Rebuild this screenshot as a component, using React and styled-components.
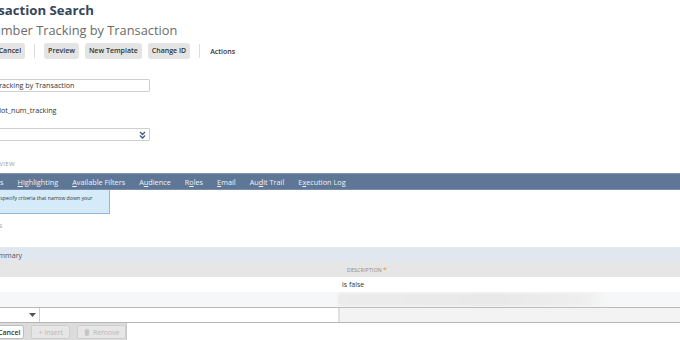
import styled, { createGlobalStyle } from "styled-components";

const Global = createGlobalStyle`
  html, body {
    margin: 0;
    padding: 0;
    background: #ffffff;
    overflow: hidden;
  }
  body {
    font-family: "Open Sans", "Liberation Sans", sans-serif;
    color: #333333;
    width: 680px;
    height: 340px;
  }
`;

const Page = styled.div`
  margin-left: -60px;
  width: 740px;
  display: flex;
  flex-direction: column;
`;

const Head = styled.div`
  padding-left: ${(p) => p.$indent || 0}px;
`;

const Title = styled.h1`
  margin: 0;
  padding-top: 2px;
  font-size: 13.2px;
  font-weight: 700;
  line-height: 16px;
  color: #34465a;
`;

const Subtitle = styled.h2`
  margin: 0;
  margin-left: -7px;
  padding-top: 3px;
  font-size: 12.8px;
  font-weight: 400;
  line-height: 18px;
  color: #6b6b6b;
`;

const Toolbar = styled.div`
  display: flex;
  align-items: center;
  gap: 6px;
  margin-top: 4px;
  height: 16px;
  padding-left: ${(p) => p.$indent || 0}px;
`;

const Btn = styled.button`
  height: 16px;
  padding: 0 4px;
  border: none;
  border-radius: 3px;
  background: #e4e4e4;
  color: #333;
  font-family: inherit;
  font-size: 7px;
  font-weight: 600;
  line-height: 16px;
`;

const Sep = styled.span`
  width: 1px;
  height: 14px;
  background: #dcdcdc;
  margin: 0 3px;
`;

const Actions = styled.span`
  font-size: 7px;
  font-weight: 600;
  color: #333;
  margin-left: 1px;
`;

const Form = styled.div`
  display: flex;
  flex-direction: column;
  padding-left: ${(p) => p.$indent || 0}px;
  margin-top: 12px;
`;

const Label = styled.div`
  height: 8px;
  font-size: 5.5px;
  text-transform: uppercase;
  color: #9a9a9a;
  letter-spacing: 0.2px;
  margin-top: ${(p) => p.$top || 0}px;
`;

const TextInput = styled.div`
  box-sizing: border-box;
  width: 202px;
  height: 13px;
  border: 1px solid #cfcfcf;
  border-radius: 1px;
  padding: 0 4px;
  font-size: 7.2px;
  line-height: 11px;
  color: #333;
`;

const Value = styled.div`
  font-size: 7.2px;
  line-height: 11px;
  color: #333;
  text-indent: 1px;
  margin-top: ${(p) => p.$top || 0}px;
`;

const Select = styled.div`
  box-sizing: border-box;
  width: 202px;
  height: 13px;
  border: 1px solid #cfcfcf;
  border-radius: 1px;
  display: flex;
  align-items: center;
  justify-content: flex-end;
  padding-right: 3px;
`;

const SectionLabel = styled.div`
  font-size: 6px;
  text-transform: uppercase;
  color: #9a9a9a;
  letter-spacing: 0.3px;
  padding-left: ${(p) => p.$indent || 0}px;
  margin-top: ${(p) => p.$top || 0}px;
  line-height: 8px;
`;

const TabBar = styled.div`
  margin-top: 5px;
  height: 17px;
  box-sizing: border-box;
  background: #5f7797;
  border-top: 1px solid #8497b0;
  border-bottom: 1px solid #7a8ea9;
  display: flex;
  align-items: center;
`;

const TabList = styled.div`
  display: flex;
  align-items: center;
  gap: 14px;
`;

const Tab = styled.span`
  font-size: 7.3px;
  color: #eef2f7;
  white-space: nowrap;
  u {
    text-decoration: underline;
    text-underline-offset: 1px;
  }
`;

const Tip = styled.div`
  box-sizing: border-box;
  width: 170px;
  height: 24px;
  background: #d5ebfa;
  border: 1px solid #92b6d8;
  border-top: none;
  font-size: 5.2px;
  color: #333;
  padding: 4px 0 0 0;
  text-indent: -4px;
  line-height: 8px;
  white-space: nowrap;
  overflow: hidden;
`;

const SubTabBar = styled.div`
  margin-top: 17px;
  height: 15px;
  background: #e1e7ef;
  display: flex;
  align-items: center;
  padding-left: ${(p) => p.$indent || 0}px;
  font-size: 7.2px;
  color: #555;
  u {
    text-underline-offset: 1px;
  }
`;

const Grid = styled.div`
  display: grid;
  grid-template-columns: 398px 1fr;
`;

const HeadCell = styled.div`
  height: 15px;
  background: #e6e6e6;
  font-size: 5.2px;
  text-transform: uppercase;
  color: #888;
  display: flex;
  align-items: center;
  padding-left: ${(p) => p.$pad || 0}px;
  letter-spacing: 0.2px;
  span {
    color: #e59a2b;
    font-size: 7px;
    margin-left: 1px;
  }
`;

const Cell = styled.div`
  height: 15px;
  box-sizing: border-box;
  background: ${(p) => p.$bg || "#ffffff"};
  font-size: 7px;
  color: #333;
  display: flex;
  align-items: center;
  padding-left: ${(p) => p.$pad || 0}px;
`;

const Smudge = styled.div`
  width: 270px;
  height: 13px;
  background: linear-gradient(90deg, #ececec, #e9e9e9 60%, #efefef 92%, #f6f7f8);
  filter: blur(1px);
`;

const EditRow = styled.div`
  display: flex;
  height: 16px;
  box-sizing: border-box;
  border-top: 1px solid #b9b9b9;
  border-bottom: 1px solid #b5b5b5;
`;

const EditSelect = styled.div`
  box-sizing: border-box;
  width: 100px;
  border-right: 1px solid #d0d0d0;
  display: flex;
  align-items: center;
  justify-content: flex-end;
  padding-right: 3px;
  background: #fff;
`;

const EditInput = styled.div`
  width: 298px;
  background: #fff;
  border-right: 2px solid #e0e0e0;
`;

const EditGray = styled.div`
  flex: 1;
  background: #f3f3f3;
`;

const Bottom = styled.div`
  display: flex;
  align-items: center;
  gap: 7px;
  width: 187px;
  height: 18px;
  box-sizing: border-box;
  background: #dcdcdc;
  border-right: 1px solid #c8c8c8;
  padding-left: ${(p) => p.$indent || 0}px;
`;

const SmallBtn = styled.button`
  height: 14px;
  box-sizing: border-box;
  padding: 0 ${(p) => p.$pad ?? 6}px;
  border-radius: 2px;
  border: 1px solid ${(p) => (p.disabled ? "#cfcfcf" : "#bdbdbd")};
  background: ${(p) => (p.disabled ? "#e6e6e6" : "#ffffff")};
  color: ${(p) => (p.disabled ? "#b8b8b8" : "#333")};
  font-family: inherit;
  font-size: 7px;
  font-weight: ${(p) => (p.disabled ? 400 : 600)};
  display: flex;
  align-items: center;
  gap: 3px;
  white-space: nowrap;
`;

const DoubleChevron = () => (
  <svg width="7" height="8" viewBox="0 0 7 8">
    <path d="M1 1l2.5 2.5L6 1M1 4.5L3.5 7 6 4.5" fill="none" stroke="#3d5a86" strokeWidth="1.3" />
  </svg>
);

const Caret = () => (
  <svg width="7" height="4" viewBox="0 0 7 4">
    <path d="M0 0h7L3.5 4z" fill="#555" />
  </svg>
);

const Trash = () => (
  <svg width="6" height="7" viewBox="0 0 6 7">
    <path d="M0.5 1h5M2 1V0.4h2V1M1 1.6h4l-0.4 5H1.4z" fill="#c4c4c4" stroke="#c4c4c4" strokeWidth="0.6" />
  </svg>
);

export default function App() {
  return (
    <>
      <Global />
      <Page>
        <Head $indent={28}>
          <Title>Transaction Search</Title>
          <Subtitle>Lot Number Tracking by Transaction</Subtitle>
        </Head>
        <Toolbar $indent={25}>
          <Btn>Save</Btn>
          <Btn>Cancel</Btn>
          <Sep />
          <Btn>Preview</Btn>
          <Btn>New Template</Btn>
          <Btn>Change ID</Btn>
          <Sep />
          <Actions>Actions</Actions>
        </Toolbar>
        <Form $indent={8}>
          <Label>Search title</Label>
          <TextInput>Lot Number Tracking by Transaction</TextInput>
          <Label $top={4}>ID</Label>
          <Value $top={1}>customsearch_lot_num_tracking</Value>
          <Label $top={4}>Owner</Label>
          <Select>
            <DoubleChevron />
          </Select>
        </Form>
        <SectionLabel $indent={43} $top={19}>Overview</SectionLabel>
        <TabBar>
          <TabList>
            <Tab><u>C</u>riteria</Tab>
            <Tab><u>R</u>esults</Tab>
            <Tab><u>H</u>ighlighting</Tab>
            <Tab><u>A</u>vailable Filters</Tab>
            <Tab>A<u>u</u>dience</Tab>
            <Tab>R<u>o</u>les</Tab>
            <Tab><u>E</u>mail</Tab>
            <Tab>Au<u>d</u>it Trail</Tab>
            <Tab>E<u>x</u>ecution Log</Tab>
          </TabList>
        </TabBar>
        <Tip>Use the Criteria subtab to specify criteria that narrow down your</Tip>
        <SectionLabel $indent={39} $top={8}>Filters</SectionLabel>
        <SubTabBar $indent={50}>
          S<u>u</u>mmary
        </SubTabBar>
        <Grid>
          <HeadCell $pad={20}>Filter</HeadCell>
          <HeadCell $pad={9}>
            Description<span>*</span>
          </HeadCell>
          <Cell />
          <Cell $pad={4}>is false</Cell>
          <Cell $bg="#f6f7f8" />
          <Cell $bg="#f6f7f8">
            <Smudge />
          </Cell>
        </Grid>
        <EditRow>
          <EditSelect>
            <Caret />
          </EditSelect>
          <EditInput />
          <EditGray />
        </EditRow>
        <Bottom $indent={54}>
          <SmallBtn $pad={3}>Cancel</SmallBtn>
          <SmallBtn disabled>+ Insert</SmallBtn>
          <SmallBtn disabled>
            <Trash />
            Remove
          </SmallBtn>
        </Bottom>
      </Page>
    </>
  );
}
